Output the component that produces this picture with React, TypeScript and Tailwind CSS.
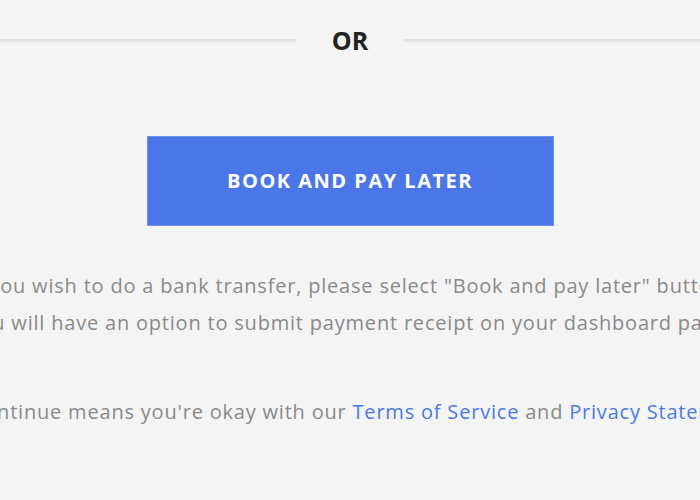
export default function App() {
  return (
    <div className="min-h-[500px] w-full overflow-hidden bg-[#f4f4f4] font-['Open_Sans',sans-serif]">
      <div className="flex flex-col items-center">
        {/* Divider */}
        <div className="flex w-full items-center pt-[25px]">
          <div className="h-[3px] flex-1 bg-[#e3e3e3]" />
          <span className="px-[36px] text-[25px] font-bold leading-[30px] text-[#222]">OR</span>
          <div className="h-[3px] flex-1 bg-[#e3e3e3]" />
        </div>

        <button className="mt-[81px] h-[90px] w-[407px] border border-[#6b90ef] bg-[#4a76e8] text-[20px] font-bold tracking-[1.5px] text-white">
          BOOK AND PAY LATER
        </button>

        <div className="mt-[41px] flex w-[1000px] shrink-0 flex-col items-center text-center text-[20px] tracking-[0.8px] text-[#8a8a8a]">
          <p className="leading-[37px]">
            If you wish to do a bank transfer, please select "Book and pay later" button.
            <br />
            You will have an option to submit payment receipt on your dashboard page.
          </p>
          <p className="mt-[52px] leading-[37px]">
            To continue means you're okay with our{' '}
            <a className="text-[#4a7ae8]">Terms of Service</a> and{' '}
            <a className="text-[#4a7ae8]">Privacy Statement</a>.
          </p>
        </div>
      </div>
    </div>
  )
}
